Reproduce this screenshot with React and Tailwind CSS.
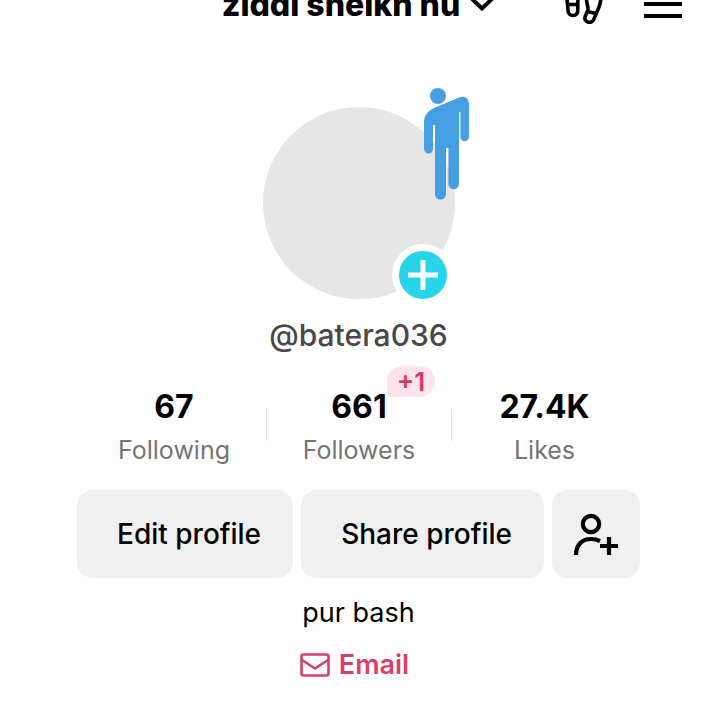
import React from "react";

const stats = [
  { label: "Following", value: "67" },
  { label: "Followers", value: "661", badge: "+1" },
  { label: "Likes", value: "27.4K" },
];

const ChevronIcon = () => (
  <svg width="28" height="16" viewBox="0 0 28 16" fill="none" stroke="currentColor" strokeWidth="4" aria-hidden="true">
    <path d="M1 -1 14 11.500 27 -1" />
  </svg>
);

const FootprintsIcon = () => (
  <svg width="40" height="44" viewBox="0 0 40 44" fill="none" stroke="currentColor" strokeWidth="3.6" strokeLinejoin="round" aria-hidden="true">
    <path d="M2.500 12C2.500 6 5 3 8.500 3s6.500 5 6 11c0 5-1 7-.7 10v6c0 3.500-1.800 5.500-4.800 5.500s-5-2-5-5.500c0-4-1.500-11-1.500-18Z" />
    <path d="M4 24.500H14" />
    <path d="M37 18c0-6-2-10-6-10s-8.500 5-8.500 11c0 5 2 8 1.500 11l-2.800 6.500c-1 3 .5 5 3 5.700s5-.7 6-3.700C32 33 36.500 27 37 18Z" />
    <path d="m23.500 31.500 8 2" />
  </svg>
);

const MenuIcon = () => (
  <svg width="38" height="30" viewBox="0 0 38 30" fill="none" stroke="currentColor" strokeWidth="4" strokeLinecap="butt" aria-hidden="true">
    <path d="M0 3h38M0 15h38M0 27h38" />
  </svg>
);

const FigureIcon = () => (
  <svg width="46" height="112" viewBox="0 0 46 112" fill="#469ee3" aria-hidden="true">
    <circle cx="14" cy="8" r="8" />
    <path d="M10 20 34 10c7-3 11 0 11 7v32a4.300 4.300 0 0 1-8.600 0V24H35v72a5.300 5.300 0 0 1-10.600 0V60H22v46a5.500 5.500 0 0 1-11 0V37H9v24a4.400 4.400 0 0 1-9 0V35C0 27 4 23 10 20Z" />
  </svg>
);

const PlusIcon = () => (
  <svg width="30" height="30" viewBox="0 0 30 30" stroke="currentColor" strokeWidth="5" aria-hidden="true">
    <path d="M15 0v30M0 15h30" />
  </svg>
);

const AddFriendIcon = () => (
  <svg width="46" height="44" viewBox="0 0 46 44" fill="none" stroke="currentColor" strokeWidth="4.2" aria-hidden="true">
    <circle cx="18" cy="12" r="8.200" />
    <path d="M3 43C3 32 10 27 18 27c3 0 6 .6 9 2" />
    <path d="M36 25v18M27 34h18" />
  </svg>
);

const MailIcon = () => (
  <svg width="30" height="24" viewBox="0 0 30 24" fill="none" stroke="currentColor" strokeWidth="2.600" strokeLinejoin="round" aria-hidden="true">
    <rect x="1.500" y="1.500" width="27" height="21" rx="2" />
    <path d="m2 7 13 8.500L28 7" />
  </svg>
);

const Header = () => (
  <header className="grid h-8 grid-cols-[1fr_auto_1fr] content-end items-end overflow-hidden pr-[38px] pl-9">
    <button type="button" className="col-start-2 flex items-center gap-2 pb-[7px] text-[32px] leading-10 font-extrabold whitespace-nowrap">
      ziddi sheikh hu
      <ChevronIcon />
    </button>
    <div className="flex items-end justify-end gap-10">
      <button type="button" aria-label="Profile views" className="pb-2">
        <FootprintsIcon />
      </button>
      <button type="button" aria-label="Menu" className="pb-[13px]">
        <MenuIcon />
      </button>
    </div>
  </header>
);

const Avatar = () => (
  <div className="relative size-48 rounded-full bg-[#e6e6e6]">
    <div className="absolute -top-[19px] -right-[15px]">
      <FigureIcon />
    </div>
    <button
      type="button"
      aria-label="Add photo"
      className="absolute right-px -bottom-[7px] flex size-[62px] items-center justify-center rounded-full border-7 border-white bg-[#27d4ea] text-white"
    >
      <PlusIcon />
    </button>
  </div>
);

const Stat = ({ label, value, badge }) => (
  <div className="flex flex-col items-center">
    <div className="relative text-[32px] leading-10 font-bold">
      {value}
      {badge && (
        <span className="absolute bottom-[30px] left-full flex h-[31px] items-center rounded-2xl rounded-bl-sm bg-[#fee4ea] px-2.5 text-[26px] font-semibold text-[#d33c66]">
          {badge}
        </span>
      )}
    </div>
    <div className="mt-[3px] text-[25px] leading-10 text-[#757575]">{label}</div>
  </div>
);

export default function App() {
  return (
    <div className="min-h-screen overflow-hidden bg-white font-['Inter',sans-serif] text-black">
      <Header />
      <main className="flex flex-col items-center pt-[75px] pr-20 pl-[77px]">
        <Avatar />
        <h1 className="mt-4 text-[30px] leading-10 font-medium text-[#484848]">@batera036</h1>

        <section className="mt-8 grid w-full grid-cols-3 pr-[3px] pl-[5px]">
          {stats.map((stat, i) => (
            <div key={stat.label} className="flex items-center">
              <div className="flex-1">
                <Stat {...stat} />
              </div>
              {i < stats.length - 1 && <div className="mb-2 h-8 w-px bg-[#e4e4e4]" />}
            </div>
          ))}
        </section>

        <div className="mt-5 flex w-full gap-2 text-[28px] font-medium whitespace-nowrap">
          <button type="button" className="h-[88px] flex-auto rounded-2xl bg-[#f0f0f0] pr-8 pl-10">
            Edit profile
          </button>
          <button type="button" className="h-[88px] flex-auto rounded-2xl bg-[#f0f0f0] pr-8 pl-10">
            Share profile
          </button>
          <button
            type="button"
            aria-label="Add friends"
            className="flex size-[88px] shrink-0 items-center justify-center rounded-2xl bg-[#f0f0f0]"
          >
            <AddFriendIcon />
          </button>
        </div>

        <p className="mt-[15px] text-[27px] leading-10">pur bash</p>
        <a href="#email" className="mt-3 flex items-center gap-[9px] pr-2 text-[27px] leading-10 font-semibold text-[#d93f67]">
          <MailIcon />
          Email
        </a>
      </main>
    </div>
  );
}
